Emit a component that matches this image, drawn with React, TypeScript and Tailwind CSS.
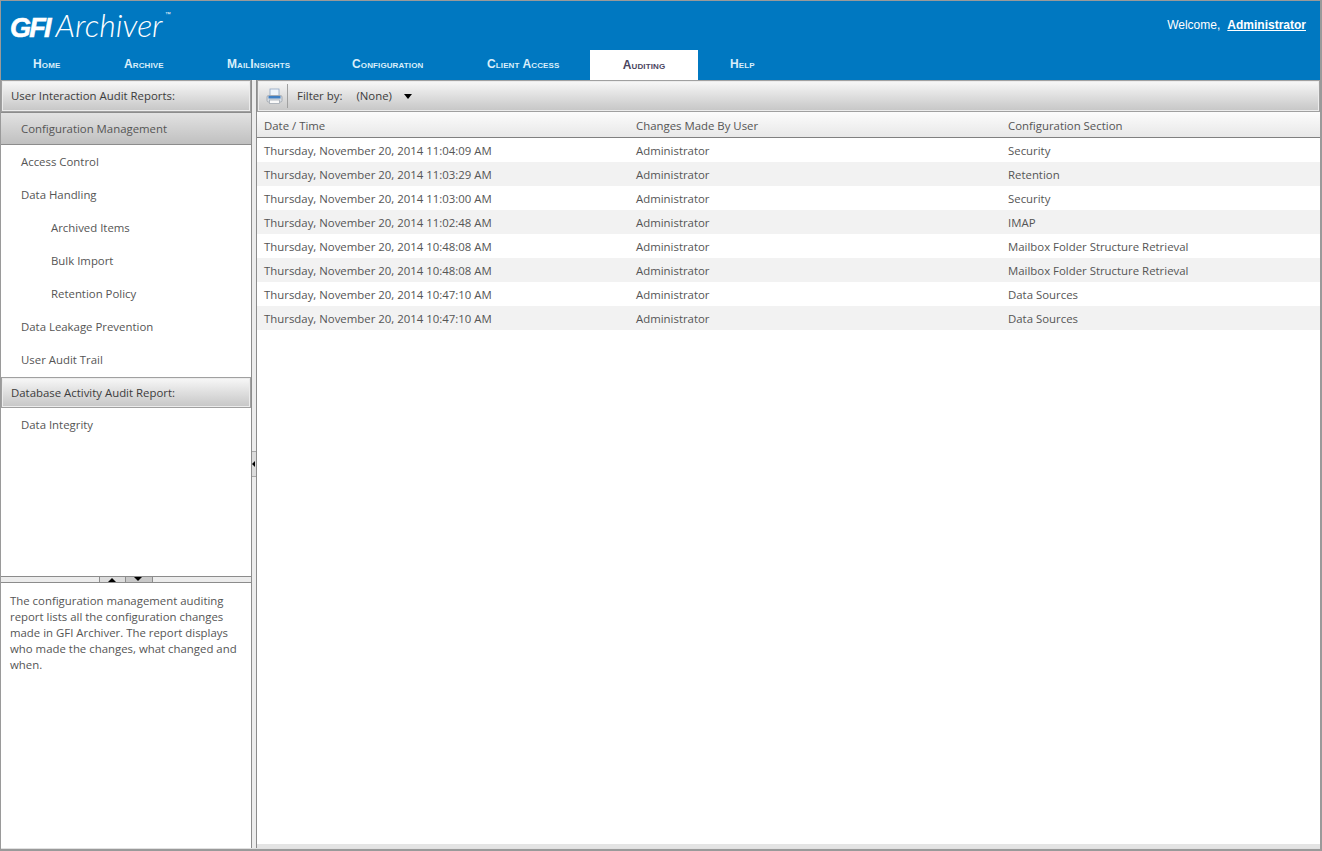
const NAV = [
  { label: "Home", width: "w-[91px]", pad: "pl-[32px]" },
  { label: "Archive", width: "w-[103px]", pad: "pl-[32px]" },
  { label: "MailInsights", width: "w-[125px]", pad: "pl-[32px]" },
  { label: "Configuration", width: "w-[135px]", pad: "pl-[32px]" },
  { label: "Client Access", width: "w-[135px]", pad: "pl-[32px]" },
];

const ROWS = [
  ["Thursday, November 20, 2014 11:04:09 AM", "Administrator", "Security"],
  ["Thursday, November 20, 2014 11:03:29 AM", "Administrator", "Retention"],
  ["Thursday, November 20, 2014 11:03:00 AM", "Administrator", "Security"],
  ["Thursday, November 20, 2014 11:02:48 AM", "Administrator", "IMAP"],
  ["Thursday, November 20, 2014 10:48:08 AM", "Administrator", "Mailbox Folder Structure Retrieval"],
  ["Thursday, November 20, 2014 10:48:08 AM", "Administrator", "Mailbox Folder Structure Retrieval"],
  ["Thursday, November 20, 2014 10:47:10 AM", "Administrator", "Data Sources"],
  ["Thursday, November 20, 2014 10:47:10 AM", "Administrator", "Data Sources"],
];

const NavItem = ({ label, width, pad }: { label: string; width: string; pad: string }) => (
  <div className={`${width} ${pad} flex h-[30px] items-center pb-[2px] text-[12px] font-bold tracking-[0.12px] text-[#d9eefa] [font-variant:small-caps]`}>
    {label}
  </div>
);

const GroupHeader = ({ label, extra = "" }: { label: string; extra?: string }) => (
  <div className={`flex flex-none items-center border border-[#a0a0a0] bg-gradient-to-b from-[#f8f8f8] to-[#c6c6c6] pl-[9px] text-[11.4px] text-[#3c3c3c] shadow-[inset_0_0_0_1px_#ececec] ${extra}`}>
    {label}
  </div>
);

const MenuItem = ({ label, indent = false, selected = false }: { label: string; indent?: boolean; selected?: boolean }) => (
  <div
    className={`flex h-[33px] flex-none items-center text-[11.4px] text-[#555] ${indent ? "pl-[50px]" : "pl-[20px]"} ${
      selected ? "border-y border-[#8c8c8c] bg-gradient-to-b from-[#e2e2e2] to-[#c0c0c0]" : ""
    }`}
  >
    {label}
  </div>
);

const PrinterIcon = () => (
  <svg width="17" height="17" viewBox="0 0 17 17" aria-hidden="true">
    <rect x="4" y="1" width="9" height="7" fill="#eef4fb" stroke="#8fa6c2" strokeWidth="0.8" />
    <rect x="1" y="7.5" width="15" height="6.5" rx="1.5" fill="#d8dde3" stroke="#9aa1a9" strokeWidth="0.8" />
    <rect x="2.5" y="8" width="12" height="2.5" fill="#3f7fc4" />
    <rect x="3.5" y="12" width="10" height="3.5" fill="#fafafa" stroke="#a3abb4" strokeWidth="0.8" />
  </svg>
);

export default function App() {
  return (
    <div className="flex h-[851px] w-[1322px] flex-col overflow-hidden border-t border-b-2 border-l border-r-2 border-[#9a9a9a] bg-white font-['Open_Sans','Noto_Sans',sans-serif]">
      <header className="flex-none bg-[#0078c1]">
        <div className="flex h-[49px] items-start justify-between">
          <div className="flex items-baseline pl-[9px] pt-[5px] text-white">
            <span className="font-['Liberation_Sans',sans-serif] text-[27px] font-bold italic leading-[38px] tracking-[-1.8px] [-webkit-text-stroke:0.6px_white]">GFI</span>
            <span className="pl-[6px] font-['Lato',sans-serif] text-[32px] font-light italic leading-[38px]">Archiver</span>
            <span className="self-start pl-[2px] pt-[3px] font-['Liberation_Sans',sans-serif] text-[6px] leading-[10px]">™</span>
          </div>
          <div className="flex pr-[14px] pt-[16px] font-['Liberation_Sans',sans-serif] text-[12px] leading-[16px] text-white">
            <span>Welcome,</span>
            <a className="pl-[7px] font-bold underline">Administrator</a>
          </div>
        </div>
        <nav className="flex h-[30px] font-['Liberation_Sans',sans-serif]">
          {NAV.map((item) => (
            <NavItem key={item.label} {...item} />
          ))}
          <div className="flex h-[30px] w-[108px] items-center justify-center bg-white text-[12px] font-bold tracking-[0.12px] text-[#4a4560] [font-variant:small-caps]">
            Auditing
          </div>
          <NavItem label="Help" width="w-[80px]" pad="pl-[32px]" />
        </nav>
      </header>

      <div className="flex min-h-0 flex-1 border-b border-[#e0e0e0]">
        <aside className="flex w-[251px] flex-none flex-col border-r border-[#8c8c8c]">
          <GroupHeader label="User Interaction Audit Reports:" extra="h-[32px]" />
          <MenuItem label="Configuration Management" selected />
          <MenuItem label="Access Control" />
          <MenuItem label="Data Handling" />
          <MenuItem label="Archived Items" indent />
          <MenuItem label="Bulk Import" indent />
          <MenuItem label="Retention Policy" indent />
          <MenuItem label="Data Leakage Prevention" />
          <MenuItem label="User Audit Trail" />
          <GroupHeader label="Database Activity Audit Report:" extra="mt-px h-[31px]" />
          <MenuItem label="Data Integrity" />
          <div className="flex-1" />
          <div className="flex h-[7px] flex-none justify-center border-y border-[#8c8c8c] bg-[#ececec]">
            <div className="relative h-[5px] w-[27px] border-x border-[#8c8c8c] bg-[#dcdcdc]">
              <span className="absolute bottom-0 left-[8px] h-0 w-0 border-x-[4px] border-b-[4px] border-x-transparent border-b-black" />
            </div>
            <div className="relative h-[5px] w-[27px] border-r border-[#8c8c8c] bg-[#c8c8c8]">
              <span className="absolute left-[8px] top-0 h-0 w-0 border-x-[4px] border-t-[4px] border-x-transparent border-t-black" />
            </div>
          </div>
          <p className="h-[265px] flex-none px-[9px] pt-[10px] text-[11.4px] leading-[16px] text-[#555]">
            The configuration management auditing report lists all the configuration changes made in GFI Archiver. The report displays who made the changes, what changed and when.
          </p>
        </aside>

        <div className="relative w-[5px] flex-none border-r border-[#8c8c8c] bg-[#ececec]">
          <div className="absolute left-0 top-[371px] flex h-[26px] w-[4px] items-center border-y border-[#a8a8a8] bg-[#dcdcdc]">
            <span className="h-0 w-0 border-y-[3px] border-r-[3px] border-y-transparent border-r-black" />
          </div>
        </div>

        <main className="flex min-w-0 flex-1 flex-col">
          <div className="flex h-[32px] flex-none items-center border border-[#a0a0a0] bg-gradient-to-b from-[#f8f8f8] to-[#c6c6c6] text-[11.4px] text-[#3c3c3c] shadow-[inset_0_0_0_1px_#ececec]">
            <div className="flex w-[26px] justify-center pl-[6px]">
              <PrinterIcon />
            </div>
            <div className="ml-[3px] h-[24px] w-px bg-[#a0a0a0]" />
            <span className="pl-[9px]">Filter by:</span>
            <span className="pl-[14px]">(None)</span>
            <span className="ml-[12px] h-0 w-0 border-x-[4px] border-t-[5px] border-x-transparent border-t-black" />
          </div>
          <div className="grid h-[26px] flex-none grid-cols-[372px_372px_1fr] items-center border-b border-[#808080] bg-gradient-to-b from-[#fcfcfc] to-[#e8e8e8] text-[11.4px] text-[#555]">
            <span className="pl-[7px] pt-[3px]">Date / Time</span>
            <span className="pl-[7px] pt-[3px]">Changes Made By User</span>
            <span className="pl-[7px] pt-[3px]">Configuration Section</span>
          </div>
          <div className="flex-1">
            {ROWS.map((row, i) => (
              <div key={i} className={`grid h-[24px] grid-cols-[372px_372px_1fr] items-center text-[11.4px] text-[#555] ${i % 2 === 1 ? "bg-[#f2f2f2]" : ""}`}>
                {row.map((cell, j) => (
                  <span key={j} className="pl-[7px] pt-px">{cell}</span>
                ))}
              </div>
            ))}
          </div>
          <div className="h-[4px] flex-none bg-[#e4e4e4]" />
        </main>
      </div>
    </div>
  );
}
